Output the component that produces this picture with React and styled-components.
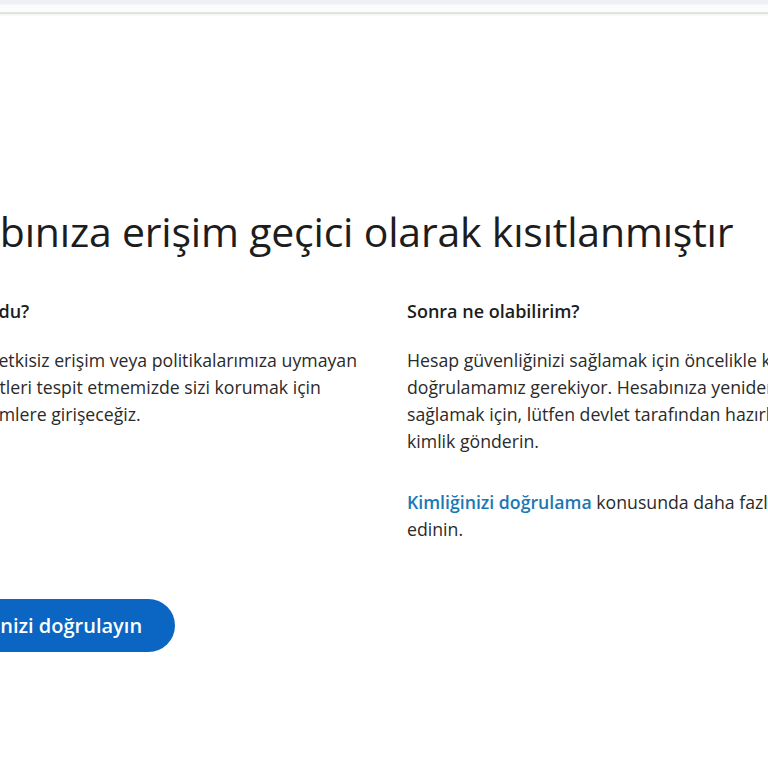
import React from 'react';
import styled, { createGlobalStyle } from 'styled-components';

const GlobalStyle = createGlobalStyle`
  html, body {
    margin: 0;
    padding: 0;
    background: #ffffff;
  }
  body {
    font-family: "Open Sans", "Noto Sans", "Liberation Sans", sans-serif;
    color: #1f1f1f;
    overflow: hidden;
  }
`;

const Page = styled.div`
  width: 768px;
  height: 768px;
  overflow: hidden;
  background: #fff;
`;

const TopBar = styled.div`
  height: 12px;
  background: linear-gradient(#eef0f6 0, #eef0f6 4px, #fafcfc 5px, #fbfcfc 100%);
  border-bottom: 2px solid #e1e4de;
  box-shadow: 0 1px 0 #f3f5f1, 0 2px 0 #fafbf8;
`;

const Main = styled.main`
  margin-left: -95px;
  width: 1000px;
  padding-top: 190px;
`;

const Title = styled.h1`
  margin: 0;
  font-size: 41px;
  font-weight: 400;
  line-height: 54px;
  color: #1d1d1d;
  letter-spacing: -0.2px;
  white-space: nowrap;
`;

const Columns = styled.div`
  display: grid;
  grid-template-columns: 460px 480px;
  column-gap: 42px;
  margin-top: 40px;
`;

const Column = styled.section`
  display: flex;
  flex-direction: column;
  margin-left: ${p => p.$inset || 0}px;
`;

const Heading = styled.h2`
  margin: 0 0 22px;
  font-size: 18px;
  font-weight: 600;
  line-height: 27px;
  color: #1d1d1d;
`;

const Text = styled.p`
  margin: 0 0 34px;
  font-size: 17.7px;
  line-height: 27px;
  color: #2a2a2a;
  white-space: nowrap;
`;

const Link = styled.a`
  color: #1a78b4;
  font-weight: 600;
  text-decoration: none;
`;

const Button = styled.button`
  margin-top: 22px;
  height: 53px;
  padding: 0 33px 0 30px;
  border: none;
  border-radius: 27px;
  background: #0a66c2;
  color: #fff;
  font-family: inherit;
  font-size: 20px;
  font-weight: 600;
  cursor: pointer;
`;

export default function App() {
  return (
    <Page>
      <GlobalStyle />
      <TopBar />
      <Main>
        <Title>Hesabınıza erişim geçici olarak kısıtlanmıştır</Title>
        <Columns>
          <Column $inset={-10}>
            <Heading>Bu neden oldu?</Heading>
            <Text>
              Hesabınıza yetkisiz erişim veya politikalarımıza uymayan<br />
              çeşitli faaliyetleri tespit etmemizde sizi korumak için<br />
              zorunlu önlemlere girişeceğiz.
            </Text>
          </Column>
          <Column>
            <Heading>Sonra ne olabilirim?</Heading>
            <Text>
              Hesap güvenliğinizi sağlamak için öncelikle kimliğinizi<br />
              doğrulamamız gerekiyor. Hesabınıza yeniden erişim<br />
              sağlamak için, lütfen devlet tarafından hazırlanmış bir<br />
              kimlik gönderin.
            </Text>
            <Text>
              <Link href="#">Kimliğinizi doğrulama</Link> konusunda daha fazla bilgi<br />
              edinin.
            </Text>
          </Column>
        </Columns>
        <Button>Kimliğinizi doğrulayın</Button>
      </Main>
    </Page>
  );
}
